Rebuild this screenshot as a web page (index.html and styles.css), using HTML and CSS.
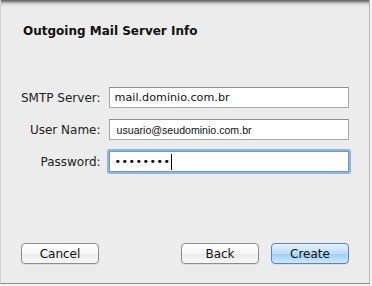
FILE: index.html
```html
<!DOCTYPE html>
<html lang="en">
<head>
  <meta charset="UTF-8" />
  <meta name="viewport" content="width=device-width, initial-scale=1.0"/>
  <title>Outgoing Mail Server Info</title>
  <link rel="stylesheet" href="styles.css">
</head>
<body>

  <div class="sheet">
    <h1 class="sheet-title">Outgoing Mail Server Info</h1>

    <!-- server fields -->
    <div class="form">
      <label class="form-label">SMTP Server:</label>
      <div class="field"><span class="field-text">mail.dominio.com.br</span></div>

      <label class="form-label">User Name:</label>
      <div class="field"><span class="field-text field-text-narrow">usuario@seudominio.com.br</span></div>

      <label class="form-label">Password:</label>
      <div class="field field-focus"><span class="field-dots">••••••••</span><span class="caret"></span></div>
    </div>

    <div class="buttons">
      <button class="btn">Cancel</button>
      <div class="buttons-right">
        <button class="btn">Back</button>
        <button class="btn btn-default">Create</button>
      </div>
    </div>
  </div>

</body>
</html>
```

FILE: styles.css
```css
body {
  margin: 0;
  background: #f4f4f4;
  font-family: "DejaVu Sans", Verdana, sans-serif;
  color: #1a1a1a;
}

.sheet {
  box-sizing: border-box;
  width: 370px;
  height: 284px;
  display: flex;
  flex-direction: column;
  padding: 24px 20px 19px 20px;
  background: linear-gradient(to bottom, #5e5e5e 0, #9a9a9a 2px, #d8d8d8 4px, #ececec 7px, #ececec 100%);
  border-left: 1px solid #d2d2d2;
  border-right: 1px solid #b4b4b4;
  border-bottom: 1px solid #8e8e8e;
}

.sheet-title {
  margin: 0 0 0 2px;
  font-size: 12px;
  line-height: 14px;
  font-weight: bold;
  color: #111;
}

.form {
  margin-top: 49px;
  display: grid;
  grid-template-columns: auto 1fr;
  column-gap: 8px;
  row-gap: 11px;
  align-items: center;
}

.form-label {
  font-size: 12px;
  text-align: right;
  color: #222;
  white-space: nowrap;
}

.field {
  box-sizing: border-box;
  height: 21px;
  display: flex;
  align-items: center;
  padding: 0 5px;
  background: #fff;
  border: 1px solid #a9a9a9;
  border-top-color: #8f8f8f;
}

.field-text {
  font-size: 11.2px;
  color: #111;
}

.field-text-narrow {
  font-family: "Liberation Sans", Arial, sans-serif;
  font-size: 10.6px;
  padding-left: 2px;
}

.field-focus {
  border-color: #6a98cf;
  box-shadow: 0 0 0 2px #8fb6e2;
  border-radius: 1px;
}

.field-dots {
  font-size: 11px;
  letter-spacing: 0.5px;
  color: #000;
}

.caret {
  width: 1px;
  height: 16px;
  margin-left: 1px;
  background: #000;
}

.buttons {
  margin-top: auto;
  display: flex;
  justify-content: space-between;
}

.buttons-right {
  display: flex;
  gap: 12px;
}

.btn {
  width: 78px;
  height: 21px;
  padding: 0;
  font-family: "DejaVu Sans", Verdana, sans-serif;
  font-size: 12px;
  color: #111;
  border: 1px solid #8d8d8d;
  border-radius: 4px;
  background: linear-gradient(to bottom, #ffffff 0, #f6f6f6 50%, #ebebeb 51%, #f7f7f7 100%);
  box-shadow: 0 1px 0 rgba(0,0,0,0.06);
}

.btn-default {
  border-color: #5a83b6;
  background: linear-gradient(to bottom, #e6f2fd 0, #bcdcf8 50%, #9dcdf5 51%, #cbe7fd 100%);
}
```
